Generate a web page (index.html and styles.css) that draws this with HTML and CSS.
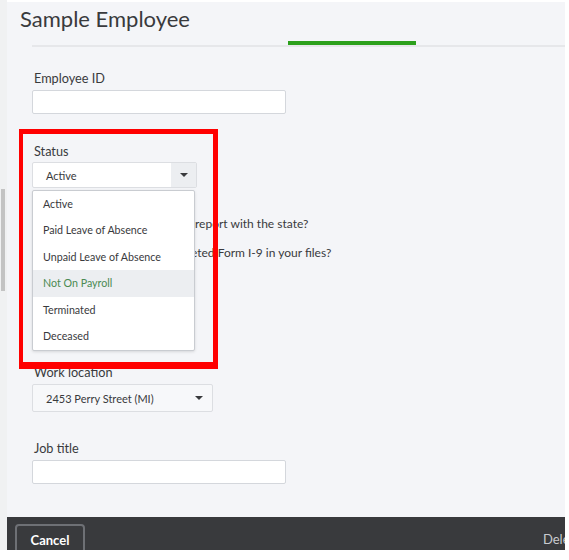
FILE: index.html
```html
<!DOCTYPE html>
<html lang="en">
<head>
    <meta charset="UTF-8">
    <meta name="viewport" content="width=device-width, initial-scale=1.0">
    <title>Sample Employee</title>
    <link rel="stylesheet" href="styles.css">
</head>
<body>
    <div class="window">
        <div class="gutter"><div class="thumb"></div></div>

        <div class="panel">
            <div class="content">
                <header class="header">
                    <h1 class="title">Sample Employee</h1>
                </header>
                <div class="tabs"><span class="tab-active"></span></div>

                <form class="form">
                    <div class="field field-id">
                        <label class="label" for="employee-id">Employee ID</label>
                        <input class="input" type="text" id="employee-id">
                    </div>

                    <div class="field field-status">
                        <label class="label">Status</label>
                        <div class="select select-status">
                            <span class="select-value">Active</span>
                            <span class="select-btn"><i class="caret"></i></span>
                        </div>
                        <ul class="menu">
                            <li class="menu-item">Active</li>
                            <li class="menu-item">Paid Leave of Absence</li>
                            <li class="menu-item">Unpaid Leave of Absence</li>
                            <li class="menu-item is-hover">Not On Payroll</li>
                            <li class="menu-item">Terminated</li>
                            <li class="menu-item">Deceased</li>
                        </ul>
                    </div>

                    <p class="question q1">Do you need to file a new hire report with the state?</p>
                    <p class="question q2">Do you have a properly completed Form I-9 in your files?</p>

                    <div class="field field-location">
                        <label class="label">Work location</label>
                        <div class="select select-location">
                            <span class="select-value">2453 Perry Street (MI)</span>
                            <i class="caret"></i>
                        </div>
                    </div>

                    <div class="field field-job">
                        <label class="label" for="job-title">Job title</label>
                        <input class="input" type="text" id="job-title">
                    </div>

                    <div class="field field-next">
                        <label class="label">Employee type</label>
                    </div>
                </form>
            </div>

            <footer class="footer">
                <button type="button" class="btn-cancel">Cancel</button>
                <span class="delete">Delete</span>
            </footer>
        </div>

        <!-- highlight around the status picker -->
        <div class="callout"></div>
    </div>
</body>
</html>
```

FILE: styles.css
```css
/* Employee detail panel */
* {
    box-sizing: border-box;
}

body {
    margin: 0;
    background-color: #fff;
    font-family: "Lato", "Open Sans", sans-serif;
    color: #393a3d;
}

.window {
    position: relative;
    display: flex;
    width: 565px;
    height: 550px;
}

.gutter {
    width: 7px;
    background-color: #f0f1f2;
}

.thumb {
    width: 4px;
    height: 102px;
    margin: 189px 0 0 1px;
    background-color: #c3c3c3;
}

.panel {
    display: flex;
    flex-direction: column;
    width: 558px;
    padding-top: 2px;
}

.content {
    flex: 1;
    min-height: 0;
    overflow: hidden;
    background-color: #f4f5f8;
}

.header {
    height: 39px;
    padding: 3px 0 0 13px;
}

.title {
    margin: 0;
    font-size: 22px;
    line-height: 28px;
    font-weight: 400;
    color: #393a3d;
}

.tabs {
    height: 6px;
    margin-left: 25px;
    border-bottom: 2px solid #e6e7ea;
}

.tab-active {
    display: block;
    width: 128px;
    height: 4px;
    margin-left: 256px;
    background-color: #2ca01c;
}

.form {
    padding-left: 25px;
}

.label {
    display: block;
    margin-left: 2px;
    font-size: 12.7px;
    line-height: 16px;
    color: #393a3d;
}

.input {
    display: block;
    width: 254px;
    height: 24px;
    margin-top: 4px;
    border: 1px solid #d4d7dc;
    border-radius: 2px;
    background-color: #fff;
}

.field-id {
    margin-top: 23px;
}

.field-status {
    position: relative;
    margin-top: 29px;
}

.select {
    display: flex;
    align-items: center;
    margin-top: 3px;
    border: 1px solid #dcdee2;
    border-radius: 2px;
    background-color: #fff;
    font-size: 11px;
}

.select-value {
    flex: 1;
    padding-left: 13px;
}

.select-status {
    width: 165px;
    height: 26px;
}

.select-btn {
    display: flex;
    align-items: center;
    justify-content: center;
    width: 25px;
    height: 100%;
    background-color: #eceef1;
}

.caret {
    width: 0;
    height: 0;
    border-left: 4px solid transparent;
    border-right: 4px solid transparent;
    border-top: 4px solid #393a3d;
}

.select-location {
    width: 181px;
    height: 28px;
    margin-top: 4px;
    padding-right: 9px;
    background-color: #f7f8fa;
}

.menu {
    position: absolute;
    top: 47px;
    left: 0;
    width: 163px;
    height: 161px;
    margin: 0;
    padding: 0;
    list-style: none;
    background-color: #fff;
    border: 1px solid #c9ccd1;
    border-radius: 2px;
    box-shadow: 0 1px 3px rgba(0, 0, 0, 0.12);
}

.menu-item {
    height: 26.4px;
    line-height: 26.4px;
    padding-left: 10px;
    font-size: 10.7px;
    color: #393a3d;
}

.menu-item.is-hover {
    background-color: #eceef1;
    color: #4a8a52;
}

.question {
    margin: 0 0 0 2px;
    font-size: 12px;
    line-height: 16px;
    white-space: nowrap;
}

.q1 {
    margin-top: 28px;
}

.q2 {
    margin-top: 13px;
}

.field-location {
    margin-top: 103px;
}

.field-job {
    margin-top: 28px;
}

.field-next {
    margin-top: 31px;
}

.footer {
    display: flex;
    align-items: flex-start;
    height: 33px;
    padding-left: 8px;
    overflow: hidden;
    background-color: #393a3d;
}

.btn-cancel {
    width: 70px;
    height: 32px;
    margin-top: 7px;
    flex-shrink: 0;
    border: 2px solid #6e7075;
    border-radius: 4px;
    background: transparent;
    color: #fff;
    font-family: inherit;
    font-size: 13px;
    font-weight: 700;
    line-height: 26px;
}

.delete {
    flex-shrink: 0;
    margin: 14px -16px 0 auto;
    font-size: 13px;
    line-height: 16px;
    color: #c9cbcf;
    white-space: nowrap;
}

.callout {
    position: absolute;
    left: 19px;
    top: 129px;
    width: 199px;
    height: 240px;
    border: solid #ff0000;
    border-width: 5px 5px 7px 4px;
}
```
